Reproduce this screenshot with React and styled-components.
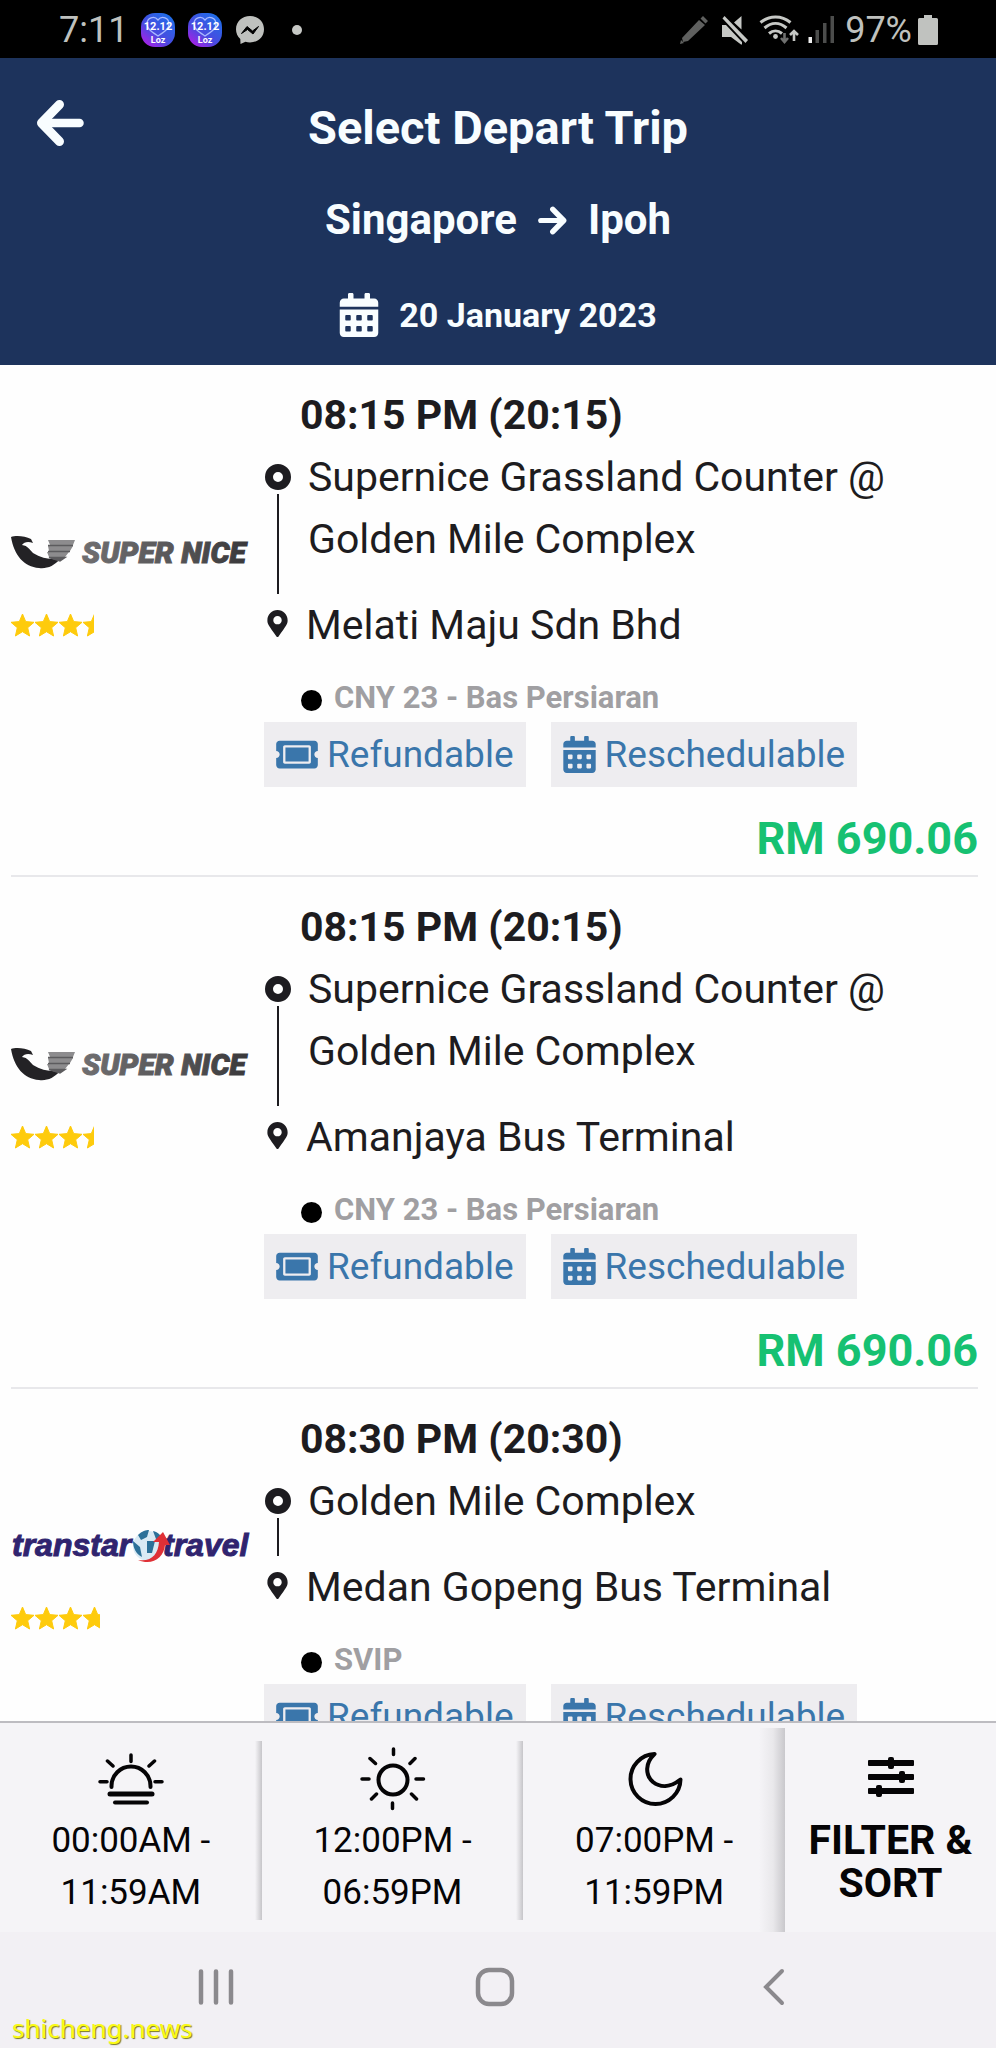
import React from "react";
import styled, { createGlobalStyle } from "styled-components";
import { FaCalendarAlt, FaTicketAlt, FaMapMarkerAlt } from "react-icons/fa";

const GlobalStyle = createGlobalStyle`
  *, *::before, *::after { box-sizing: border-box; }
  body {
    margin: 0;
    background: #fefefe;
    color: #1d1c20;
    font-family: Roboto, "Liberation Sans", sans-serif;
  }
  button { font: inherit; color: inherit; background: none; border: 0; padding: 0; cursor: pointer; }
  h1, h2, p, ul { margin: 0; padding: 0; }
  svg { display: block; flex: none; }
`;

const Screen = styled.div`
  position: relative;
  display: flex;
  flex-direction: column;
  height: 100vh;
  overflow: hidden;
`;

const StatusBar = styled.div`
  display: flex;
  align-items: center;
  justify-content: space-between;
  flex: none;
  height: 58px;
  padding: 2px 58px 0 59px;
  background: #000;
  color: #bfc1be;
  font-size: 36px;
  line-height: 56px;
`;

const StatusGroup = styled.div`
  display: flex;
  align-items: center;
  gap: ${(p) => p.$gap}px;
`;

const Header = styled.header`
  flex: none;
  padding: 40px 0 20px;
  background: #1d335c;
  color: #f8fdff;
  text-align: center;
  font-weight: 700;
`;

const HeaderTop = styled.div`
  display: grid;
  grid-template-columns: 96px 1fr 96px;
`;

const BackButton = styled.button`
  display: flex;
  align-items: center;
  justify-content: center;
  height: 50px;
  width: 48px;
  margin-left: 36px;
`;

const Title = styled.h1`
  font-size: 47px;
  line-height: 60px;
`;

const Route = styled.p`
  display: flex;
  align-items: center;
  justify-content: center;
  gap: 21px;
  margin-top: 32px;
  font-size: 42px;
  line-height: 60px;
`;

const TravelDate = styled.p`
  display: flex;
  align-items: center;
  justify-content: center;
  gap: 20px;
  margin-top: 35px;
  font-size: 34px;
  line-height: 60px;
`;

const DateIcon = styled(FaCalendarAlt)`
  width: 40px;
  height: 44px;
`;

const TripList = styled.main`
  flex: 1;
  min-height: 0;
  overflow-y: auto;
  scrollbar-width: none;
  padding: 0 18px 0 11px;
`;

const Trip = styled.article`
  padding: 19px 0 6px;
  border-bottom: 2px solid #e8e8eb;
`;

const TripBody = styled.div`
  display: flex;
  gap: 14px;
`;

const Operator = styled.div`
  display: flex;
  flex-direction: column;
  justify-content: center;
  gap: 42px;
  flex: 0 0 239px;
`;

const Details = styled.div`
  flex: 1;
  min-width: 0;
`;

const Time = styled.h2`
  padding-left: 36px;
  font-size: 41px;
  line-height: 62px;
`;

const Stop = styled.div`
  display: flex;
  gap: 16px;
  font-size: 41px;
  line-height: 62px;
`;

const StopName = styled.p`
  flex: 1;
  max-width: 640px;
  padding-bottom: ${(p) => (p.$last ? 0 : 24)}px;
`;

const Rail = styled.div`
  display: flex;
  flex-direction: column;
  align-items: center;
  width: ${(p) => (p.$last ? 26 : 28)}px;
  padding-top: ${(p) => (p.$last ? 16 : 18)}px;
`;

const OriginDot = styled.span`
  flex: none;
  width: 26px;
  height: 26px;
  border: 8px solid #1d1c20;
  border-radius: 50%;
`;

const RailLine = styled.span`
  flex: 1;
  width: 2px;
  margin-top: 4px;
  background: #1d1c20;
`;

const Coach = styled.p`
  display: flex;
  align-items: center;
  gap: 12px;
  margin-top: 20px;
  padding-left: 37px;
  color: #a09fa2;
  font-size: 31px;
  font-weight: 700;
  line-height: 44px;

  &::before {
    content: "";
    width: 21px;
    height: 21px;
    margin-top: 4px;
    border-radius: 50%;
    background: #000;
  }
`;

const Tags = styled.ul`
  display: flex;
  gap: 25px;
  margin-top: 2px;
  list-style: none;
`;

const Tag = styled.li`
  display: flex;
  align-items: center;
  gap: 9px;
  height: 65px;
  padding: 0 12px;
  background: #eeedf0;
  color: #3a76ab;
  font-size: 37px;
  line-height: 65px;
`;

const TicketIcon = styled(FaTicketAlt)`
  width: 42px;
  height: 37px;
`;

const ScheduleIcon = styled(FaCalendarAlt)`
  width: 33px;
  height: 37px;
`;

const Price = styled.p`
  margin-top: 22px;
  color: #16c172;
  font-size: 45px;
  font-weight: 700;
  line-height: 60px;
  text-align: right;
`;

const FilterBar = styled.div`
  display: flex;
  flex: none;
  height: 211px;
  border-top: 2px solid #bdbcc1;
  background: #f5f4f7;
  color: #050406;
`;

const Slots = styled.div`
  display: flex;
  flex: 1;
  align-items: stretch;
  margin-top: 5px;
  background: linear-gradient(to left, #c9c8cc, #e9e8eb 12px, #f5f4f7 26px);
`;

const Slot = styled.button`
  display: flex;
  flex: 1;
  flex-direction: column;
  align-items: center;
  margin: 13px 0 12px;
  padding-top: 5px;
  font-size: 35px;
  line-height: 52px;

  &:not(:last-child) {
    background: linear-gradient(to left, #c6c5c9, #f5f4f7 7px);
  }
`;

const FilterButton = styled.button`
  display: flex;
  flex-direction: column;
  align-items: center;
  gap: 22px;
  width: 211px;
  padding-top: 34px;
  font-size: 41px;
  line-height: 43px;

  && { font-weight: 700; }
`;

const FilterLabel = styled.span`
  width: 180px;
`;

const SlotText = styled.span`
  margin-top: 3px;
  white-space: pre-line;
`;

const NavBar = styled.nav`
  display: flex;
  flex: none;
  height: 116px;
  padding: 0 83px 6px 77px;
  background: #f2f0f4;
  color: #8b898d;
`;

const NavButton = styled.button`
  display: flex;
  flex: 1;
  align-items: center;
  justify-content: center;
`;

const Watermark = styled.span`
  position: absolute;
  left: 12px;
  bottom: 2px;
  color: #fbfb14;
  font-family: "Noto Sans", sans-serif;
  font-size: 26px;
  line-height: 36px;
  text-shadow: 1px 1px 1px #77771c;
`;

function Arrow({ size, right }) {
  return (
    <svg width={size} height={size} viewBox="0 0 48 48" fill="none" stroke="currentColor" strokeLinecap="round" strokeLinejoin="round" aria-hidden="true">
      <g transform={right ? "translate(48 0) scale(-1 1)" : undefined}>
        <path d="M23.500 5.500 5.500 24l18 18.500" strokeWidth="9" />
        <path d="M8 24h35.500" strokeWidth="8.500" />
      </g>
    </svg>
  );
}

function PromoIcon({ id }) {
  return (
    <svg width="34" height="34" viewBox="0 0 34 34" aria-hidden="true">
      <defs>
        <linearGradient id={id} x1="0" y1="1" x2="0.8" y2="0">
          <stop offset="0" stopColor="#c416e8" />
          <stop offset="0.45" stopColor="#4a49e0" />
          <stop offset="1" stopColor="#1d6fe8" />
        </linearGradient>
      </defs>
      <rect width="34" height="34" rx="14" fill={`url(#${id})`} />
      <path d="M17 7C13 2 6 5 6 11c0 5 5 8 11 12 6-4 11-7 11-12 0-6-7-9-11-4z" fill="none" stroke="#a9b9ff" strokeWidth="1.300" />
      <text x="17" y="17" textAnchor="middle" fontSize="11" fontWeight="700" fill="#fff">12.12</text>
      <text x="17" y="30" textAnchor="middle" fontSize="9" fontWeight="700" fill="#fff">Loz</text>
    </svg>
  );
}

function MessengerIcon() {
  return (
    <svg width="30" height="30" viewBox="0 0 30 30" aria-hidden="true">
      <path d="M15 1C7 1 1 6.500 1 14.200c0 4 1.600 7.300 4.300 9.700L5.500 29l5-2.200c1.400.4 2.900.6 4.500.6 8 0 14-5.500 14-13.200S23 1 15 1z" fill="#bfc1be" />
      <path d="M6.500 18.500l5.500-7 5.500 4.500 6-4.500-5.500 7.500-5.500-4.500z" fill="#000" stroke="#000" strokeLinejoin="round" />
    </svg>
  );
}

function StatusIcons() {
  return (
    <svg width="162" height="34" viewBox="0 0 162 34" aria-hidden="true">
      <g fill="#5f605f">
        <path d="M3 31l1-4 3 3zM5 25 22 7l6 5L11 28l-5 1zM23.500 5.500 26 3l5 5-2.500 2.500z" />
      </g>
      <g fill="#c6c8c5">
        <path d="M45 12h4l16 17v2.500h-1L54 24h-9zM57 9.500 64.500 3v13.500z" />
        <path d="M45.500 5.500 47.500 3 71 27l-2.500 3z" />
      </g>
      <g fill="none" stroke="#c6c8c5" strokeWidth="3">
        <path d="M83.500 9.500c9-7.500 21-7.500 30 0" />
        <path d="M87.500 15c7-6 15-6 22 0" />
        <path d="M92 20.500c4-3.500 9-3.500 13 0" />
      </g>
      <circle cx="98.500" cy="23.500" r="2.400" fill="#c6c8c5" />
      <path d="M107.500 20v8M104 25l3.500 4 3.500-4" stroke="#6f706f" strokeWidth="2.600" fill="none" />
      <path d="M117 28v-8M113 22l4-4 4 4" stroke="#c6c8c5" strokeWidth="2.600" fill="none" />
      <rect x="131.500" y="24" width="3.500" height="6" fill="#f0f0f0" />
      <g fill="#4c4d4c">
        <rect x="138.500" y="17" width="3.500" height="13" />
        <rect x="146" y="10" width="3.500" height="20" />
        <rect x="153.500" y="3" width="3.500" height="27" />
      </g>
    </svg>
  );
}

function BatteryIcon() {
  return (
    <svg width="20" height="30" viewBox="0 0 20 30" fill="#c0c2bf" aria-hidden="true">
      <path d="M6 0h8v3h4.500Q20 3 20 4.500v24Q20 30 18.500 30h-17Q0 30 0 28.500v-24Q0 3 1.500 3H6z" />
    </svg>
  );
}

function SuperNiceLogo() {
  return (
    <svg width="239" height="36" viewBox="0 0 239 36" role="img" aria-label="Super Nice">
      <defs>
        <linearGradient id="letters" x1="0" x2="1">
          <stop offset="0" stopColor="#6f6e70" />
          <stop offset="0.5" stopColor="#5a595b" />
          <stop offset="1" stopColor="#39383a" />
        </linearGradient>
      </defs>
      <path d="M0 2c5-2 14-1 20 2l2 4c-5-2-9-1-11 2 6 1 7 4 11 8 8 5 17 7 27 6-6 7-13 10-21 9C13 32 3 20 0 2z" fill="#232225" />
      <path d="M37 5h27l-2 5H39zM37 11h25l-3 5H38zM36 17h22l-4 5H38z" fill="#8d8c8e" />
      <path d="M37 10.500h25M37 16.500h22M38 22.500h16L49 26z" stroke="#5c5b5e" strokeWidth="1.500" fill="#5c5b5e" />
      <text x="71" y="28" fontFamily="Roboto, sans-serif" fontSize="30" fontWeight="900" fontStyle="italic" fill="url(#letters)" stroke="url(#letters)" strokeWidth="1">SUPER NICE</text>
    </svg>
  );
}

function TranstarLogo() {
  return (
    <svg width="239" height="36" viewBox="0 2 239 36" role="img" aria-label="Transtar Travel">
      <g fill="#30246f" stroke="#30246f" strokeWidth="1" fontFamily="'Liberation Sans', sans-serif" fontSize="32" fontWeight="700" fontStyle="italic">
        <text x="1" y="30">transtar</text>
        <text x="152" y="30">travel</text>
      </g>
      <circle cx="137" cy="20" r="15" fill="#d9eaf4" />
      <path d="M127 9c4-4 8-5 11-5l-2 7-6 3zM142 5c5 1 9 5 10 9l-7-1zM122 15l7 6 2 10c-6-3-9-9-9-16zM136 15h8l-3 12h-5z" fill="#2c7199" />
      <path d="M127 34c14 2 20-6 21-18h-6l10-10 7 13h-5c-1 13-13 21-27 15z" fill="#df3036" />
    </svg>
  );
}

const STAR = "M11.500 0l3.200 7.600 8.300.7-6.300 5.400 1.900 8.300-7.100-4.300L4.400 22l1.900-8.300L0 8.300l8.300-.7z";

function Stars({ width }) {
  return (
    <svg width={width} height="24" viewBox={`0 0 ${width} 24`} fill="#fecb0c" stroke="#fecb0c" role="img" aria-label="Rating">
      {[0, 1, 2, 3].map((i) => (
        <path key={i} d={STAR} transform={`translate(${i * 24} 1)`} />
      ))}
    </svg>
  );
}

const slotIcon = {
  width: 66,
  height: 66,
  viewBox: "0 0 66 66",
  fill: "none",
  stroke: "currentColor",
  strokeWidth: 4,
  strokeLinecap: "round",
  strokeLinejoin: "round",
  "aria-hidden": true,
};

function SunriseIcon() {
  return (
    <svg {...slotIcon}>
      <path d="M13.500 41v-1a19.500 19.500 0 0 1 39 0v1" />
      <path d="M2 35.700h7M57 35.700h7M33 9v6.500M9.500 15l5.500 5M56.500 15 51 20" strokeWidth="3.500" />
      <path d="M12 48h42" strokeWidth="5" />
      <path d="M17 56.500h32" />
    </svg>
  );
}

function SunIcon() {
  return (
    <svg {...slotIcon}>
      <circle cx="33" cy="34" r="14.500" />
      <path d="M33.500 3v5.500M2 33h7M56 33h7.500M32.500 57v5.500M10 12.500l5.500 5M55 12.500l-5 5M11.500 53l5-5M51.500 48l5 5" strokeWidth="3.500" />
    </svg>
  );
}

function MoonIcon() {
  return (
    <svg {...slotIcon} viewBox="-2 0 66 66">
      <path d="M31.500 8A25 25 0 1 0 57.500 33.500C47 42 37 41.500 30 36 22 29 22 17 31.500 8z" />
    </svg>
  );
}

function SlidersIcon() {
  return (
    <svg width="46" height="40" viewBox="0 0 46 40" fill="currentColor" aria-hidden="true">
      <rect y="3" width="46" height="6" rx="1" />
      <rect y="17" width="46" height="6" rx="1" />
      <rect y="31" width="46" height="6" rx="1" />
      <rect x="20" y="0" width="6" height="12" rx="2" />
      <rect x="31" y="14" width="6" height="12" rx="2" />
      <rect x="8" y="28" width="6" height="12" rx="2" />
    </svg>
  );
}

const trips = [
  {
    time: "08:15 PM (20:15)",
    from: "Supernice Grassland Counter @ Golden Mile Complex",
    to: "Melati Maju Sdn Bhd",
    coach: "CNY 23 - Bas Persiaran",
    price: "RM 690.06",
    logo: <SuperNiceLogo />,
    rating: 83,
  },
  {
    time: "08:15 PM (20:15)",
    from: "Supernice Grassland Counter @ Golden Mile Complex",
    to: "Amanjaya Bus Terminal",
    coach: "CNY 23 - Bas Persiaran",
    price: "RM 690.06",
    logo: <SuperNiceLogo />,
    rating: 83,
  },
  {
    time: "08:30 PM (20:30)",
    from: "Golden Mile Complex",
    to: "Medan Gopeng Bus Terminal",
    coach: "SVIP",
    logo: <TranstarLogo />,
    rating: 89,
  },
];

const slots = [
  { text: "00:00AM -\n11:59AM", icon: <SunriseIcon /> },
  { text: "12:00PM -\n06:59PM", icon: <SunIcon /> },
  { text: "07:00PM -\n11:59PM", icon: <MoonIcon /> },
];

function TripCard({ trip }) {
  return (
    <Trip>
      <TripBody>
        <Operator>
          {trip.logo}
          <Stars width={trip.rating} />
        </Operator>
        <Details>
          <Time>{trip.time}</Time>
          <Stop>
            <Rail>
              <OriginDot />
              <RailLine />
            </Rail>
            <StopName>{trip.from}</StopName>
          </Stop>
          <Stop>
            <Rail $last>
              <FaMapMarkerAlt size={27} />
            </Rail>
            <StopName $last>{trip.to}</StopName>
          </Stop>
          <Coach>{trip.coach}</Coach>
          <Tags>
            <Tag>
              <TicketIcon />
              Refundable
            </Tag>
            <Tag>
              <ScheduleIcon />
              Reschedulable
            </Tag>
          </Tags>
        </Details>
      </TripBody>
      {trip.price && <Price>{trip.price}</Price>}
    </Trip>
  );
}

export default function App() {
  return (
    <>
      <GlobalStyle />
      <Screen>
        <StatusBar>
          <StatusGroup $gap={13}>
            <span>7:11</span>
            <PromoIcon id="promo-a" />
            <PromoIcon id="promo-b" />
            <MessengerIcon />
            <svg width="44" height="10" viewBox="0 0 44 10" aria-hidden="true">
              <circle cx="19" cy="5" r="5" fill="#c6c8c5" />
            </svg>
          </StatusGroup>
          <StatusGroup $gap={6}>
            <StatusIcons />
            <span>97%</span>
            <BatteryIcon />
          </StatusGroup>
        </StatusBar>
        <Header>
          <HeaderTop>
            <BackButton aria-label="Back">
              <Arrow size={48} />
            </BackButton>
            <Title>Select Depart Trip</Title>
          </HeaderTop>
          <Route>
            <span>Singapore</span>
            <Arrow size={29} right />
            <span>Ipoh</span>
          </Route>
          <TravelDate>
            <DateIcon />
            <span>20 January 2023</span>
          </TravelDate>
        </Header>
        <TripList>
          {trips.map((trip, i) => (
            <TripCard key={i} trip={trip} />
          ))}
        </TripList>
        <FilterBar>
          <Slots>
            {slots.map((slot) => (
              <Slot key={slot.text}>
                {slot.icon}
                <SlotText>{slot.text}</SlotText>
              </Slot>
            ))}
          </Slots>
          <FilterButton>
            <SlidersIcon />
            <FilterLabel>FILTER &amp; SORT</FilterLabel>
          </FilterButton>
        </FilterBar>
        <NavBar>
          <NavButton aria-label="Recent apps">
            <svg width="36" height="38" viewBox="0 0 36 38" stroke="currentColor" strokeWidth="4.500" strokeLinecap="round">
              <path d="M3 3.500v31M18 3.500v31M33 3.500v31" />
            </svg>
          </NavButton>
          <NavButton aria-label="Home">
            <svg width="40" height="40" viewBox="0 0 40 40" fill="none" stroke="currentColor" strokeWidth="4.500">
              <rect x="3" y="3" width="34" height="34" rx="11" />
            </svg>
          </NavButton>
          <NavButton aria-label="Back">
            <svg width="24" height="38" viewBox="0 0 24 38" fill="none" stroke="currentColor" strokeWidth="4" strokeLinecap="round">
              <path d="M20 3 4 19l16 16" />
            </svg>
          </NavButton>
        </NavBar>
        <Watermark>shicheng.news</Watermark>
      </Screen>
    </>
  );
}
